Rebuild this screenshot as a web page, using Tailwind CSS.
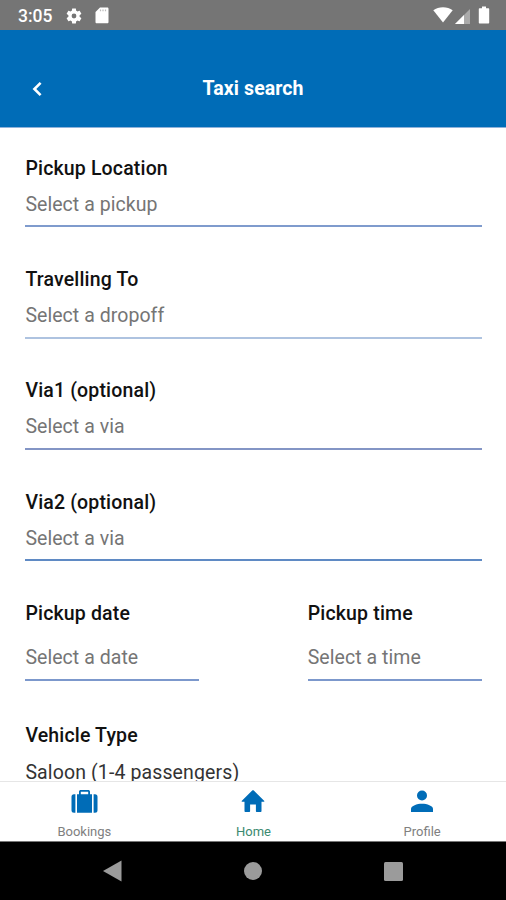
<!DOCTYPE html>
<html lang="en">
<head>
<meta charset="utf-8">
<title>Taxi search</title>
<script src="https://cdn.jsdelivr.net/npm/@tailwindcss/browser@4"></script>
</head>
<body class="w-[506px] h-[900px] overflow-hidden bg-white font-['Roboto',sans-serif] flex flex-col text-[#111]">
<div class="h-[30px] shrink-0 bg-[#757575] flex items-center pl-[18px] pr-[16px] text-white">
  <span class="text-[17.5px] leading-[30px] font-medium w-[47px] pt-px">3:05</span>
  <svg class="w-[18px] h-[18px] mt-px" viewBox="0 0 24 24" fill="currentColor"><path d="M19.4 13c.1-.3.1-.7.1-1s0-.7-.1-1l2.200-1.700c.2-.1.200-.4.100-.6l-2-3.500c-.1-.2-.4-.3-.6-.2l-2.500 1c-.5-.4-1.100-.7-1.700-1l-.4-2.600c0-.2-.2-.4-.5-.4h-4c-.2 0-.4.200-.5.400L9.100 5c-.6.300-1.200.6-1.700 1l-2.500-1c-.2-.1-.5 0-.6.200l-2 3.500c-.1.200-.1.500.1.600L4.600 11c-.1.300-.1.700-.1 1s0 .7.100 1l-2.200 1.700c-.2.100-.2.400-.1.600l2 3.500c.1.200.4.300.6.200l2.500-1c.5.400 1.100.7 1.700 1l.4 2.600c0 .2.300.4.500.4h4c.2 0 .5-.2.500-.4l.4-2.600c.6-.3 1.200-.6 1.700-1l2.500 1c.2.100.5 0 .6-.2l2-3.500c.1-.2.100-.5-.1-.6zM12 15.200a3.200 3.200 0 1 1 0-6.400 3.200 3.200 0 0 1 0 6.400z"/></svg>
  <svg class="w-[14px] h-[17px] ml-[12px] mt-px" viewBox="0 0 14 17"><path fill="#fff" d="M5 .5h7.200c.8 0 1.300.5 1.300 1.300v13.200c0 .8-.5 1.300-1.300 1.300H1.800c-.8 0-1.300-.5-1.300-1.300V5z"/><path d="M5.500 2.500v1.800M8 2.500v1.800M10.500 2.500v1.800" stroke="#bbb" stroke-width="1.200"/></svg>
  <svg class="w-[20px] h-[16px] ml-auto" viewBox="0 0 20 16"><path fill="#fff" d="M.3 3.200C5.500-.7 14.500-.7 19.700 3.200L10 15.500z"/></svg>
  <svg class="w-[15px] h-[15px] ml-[2px] mt-[2px]" viewBox="0 0 15 15"><path fill="#aaa" d="M15 0v15H0z"/><path fill="#fff" d="M9 6v9H0z"/></svg>
  <svg class="w-[12px] h-[18px] ml-[8px]" viewBox="0 0 12 18"><path fill="#fff" d="M4 .5h4V2.300h2.200c.7 0 1 .4 1 1v13.200c0 .6-.4 1-1 1H1.800c-.6 0-1-.4-1-1V3.300c0-.6.400-1 1-1H4z"/></svg>
</div>
<header class="h-[98px] shrink-0 bg-[#006cb7] border-b border-[#8fb2da] grid grid-cols-[1fr_auto_1fr] items-center pt-[20px] text-white">
  <svg class="w-[10px] h-[16px] ml-[32px] mt-px" viewBox="0 0 10 16" fill="none" stroke="#fff" stroke-width="2.600"><path d="M8.600 1.800 2.400 8l6.200 6.200"/></svg>
  <h1 class="text-[19.500px] leading-[24px] font-bold tracking-[0.100px] w-[101px] whitespace-nowrap">Taxi search</h1>
</header>
<main class="flex-1 min-h-0 overflow-hidden pl-[25.400px] pr-[24px] pt-[28.600px] text-[19.500px] leading-[23px] tracking-[0.050px]">
  <section class="h-[111.350px]"><h2 class="font-medium tracking-[0.160px]">Pickup Location</h2><div class="mt-[13px] h-[34px] border-b-2 border-[#7f9bcd] text-[#757575]">Select a pickup</div></section>
  <section class="h-[111.350px]"><h2 class="font-medium tracking-[0.160px]">Travelling To</h2><div class="mt-[13px] h-[35px] border-b-2 border-[#aec3e0] text-[#757575]">Select a dropoff</div></section>
  <section class="h-[111.350px]"><h2 class="font-medium tracking-[0.160px]">Via1 (optional)</h2><div class="mt-[13px] h-[35px] border-b-2 border-[#8395c5] text-[#757575]">Select a via</div></section>
  <section class="h-[111.350px]"><h2 class="font-medium tracking-[0.160px]">Via2 (optional)</h2><div class="mt-[13px] h-[34.500px] border-b-2 border-[#5f8ac4] text-[#757575]">Select a via</div></section>
  <div class="flex justify-between h-[122.500px]">
    <section class="w-[174px]"><h2 class="font-medium tracking-[0.160px]">Pickup date</h2><div class="mt-[21px] h-[35px] border-b-2 border-[#7c98cc] text-[#757575]">Select a date</div></section>
    <section class="w-[174.300px]"><h2 class="font-medium tracking-[0.160px]">Pickup time</h2><div class="mt-[21px] h-[35px] border-b-2 border-[#7c98cc] text-[#757575]">Select a time</div></section>
  </div>
  <section><h2 class="font-medium tracking-[0.160px]">Vehicle Type</h2><div class="mt-[13.500px] tracking-[0.120px] text-[#333]">Saloon (1-4 passengers)</div></section>
</main>
<nav class="h-[61px] shrink-0 bg-white border-t border-[#e6e6e6] border-b border-b-[#777] grid grid-cols-3 text-[13px] leading-[16px] text-[#808080]">
  <div class="flex flex-col items-center pt-[7px]"><svg class="w-[27px] h-[25px]" viewBox="0 0 27 25" fill="#006cb7"><path d="M4.400 5.200v18.600H3A2.500 2.500 0 0 1 .5 21.300V7.700A2.500 2.500 0 0 1 3 5.200zM22.600 5.200H24a2.500 2.500 0 0 1 2.500 2.500v13.600a2.500 2.500 0 0 1-2.500 2.500h-1.400z"/><path fill-rule="evenodd" d="M6 5.200h2V2.700c0-1 .8-1.700 1.800-1.700h7.400c1 0 1.800.7 1.800 1.700v2.500h2v18.600H6zM9.800 2.800v2.400h7.400V2.800z"/></svg><span class="mt-[10px]">Bookings</span></div>
  <div class="flex flex-col items-center pt-[7px] pl-px"><svg class="w-[24px] h-[25px]" viewBox="0 0 24 25" fill="#006cb7"><path d="M11.200 1.500c.5-.5 1.100-.5 1.600 0l10.300 10.200c.5.500.2 1.100-.4 1.100h-2.200v9.100c0 .7-.4 1.100-1.100 1.100h-3.500c-.6 0-1-.4-1-1v-6.500H9.100V22c0 .6-.4 1-1 1H4.600c-.7 0-1.100-.4-1.100-1.100v-9.100H1.300c-.6 0-.9-.6-.4-1.100z"/></svg><span class="mt-[10px] text-[#3b8a70]">Home</span></div>
  <div class="flex flex-col items-center pt-[7px] pl-px"><svg class="w-[24px] h-[25px]" viewBox="0 0 24 25" fill="#006cb7"><circle cx="12" cy="6.500" r="5"/><path d="M1 23v-3c0-3.200 6-5.200 11-5.200s11 2 11 5.200v3z"/></svg><span class="mt-[10px]">Profile</span></div>
</nav>
<div class="h-[58px] shrink-0 bg-black flex items-center text-[#9b9b9b]">
  <svg class="w-[19px] h-[22px] ml-[103px]" viewBox="0 0 19 22" fill="currentColor"><path d="M18.500 .5v21L0 11z"/></svg>
  <div class="w-[18px] h-[18px] rounded-full bg-[#9b9b9b] ml-[122.300px]"></div>
  <div class="w-[19px] h-[19px] rounded-[1.500px] bg-[#9b9b9b] ml-[121.700px]"></div>
</div>
</body>
</html>
